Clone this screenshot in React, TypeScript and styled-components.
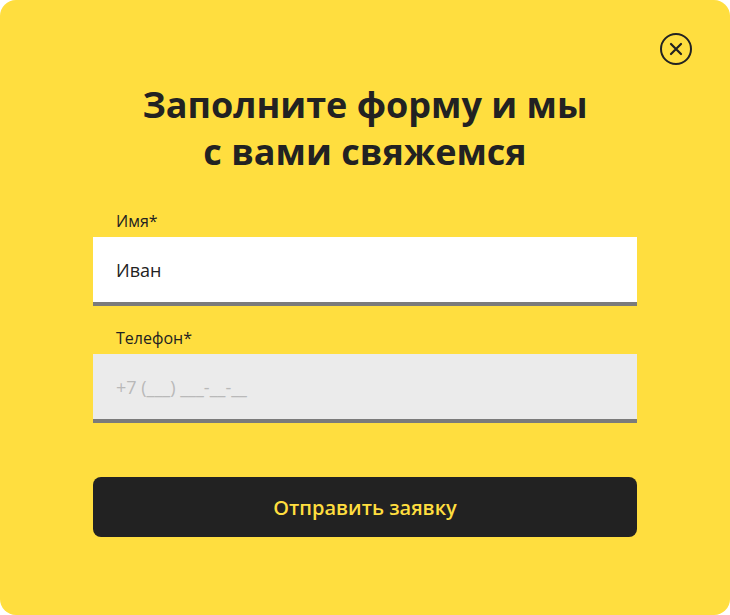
import { createGlobalStyle } from "styled-components";
import styled from "styled-components";

const GlobalStyle = createGlobalStyle`
  html, body {
    margin: 0;
    padding: 0;
    background: #ffffff;
  }
  * {
    box-sizing: border-box;
  }
`;

const Modal = styled.div`
  position: relative;
  width: 730px;
  height: 615px;
  background: #ffde3f;
  border-radius: 16px;
  font-family: "Open Sans", "Noto Sans", sans-serif;
  color: #222222;
  display: flex;
  flex-direction: column;
  align-items: center;
`;

const CloseButton = styled.button`
  position: absolute;
  top: 33px;
  right: 38px;
  width: 32px;
  height: 32px;
  padding: 0;
  border: none;
  background: transparent;
  cursor: pointer;
  display: flex;
  align-items: center;
  justify-content: center;
`;

const Title = styled.h2`
  margin: 81px 0 0;
  font-size: 36px;
  line-height: 47px;
  font-weight: 700;
  text-align: center;
`;

const Form = styled.form`
  width: 544px;
  margin-top: 36px;
  display: flex;
  flex-direction: column;
  row-gap: 22px;
`;

const Field = styled.label`
  display: flex;
  flex-direction: column;
  row-gap: 6px;
`;

const Label = styled.span`
  padding-left: 23px;
  font-size: 16px;
  line-height: 20px;
`;

const Input = styled.input<{ $filled?: boolean }>`
  height: 69px;
  padding: 0 23px;
  border: none;
  border-bottom: 4px solid #7b7b7b;
  border-radius: 0;
  outline: none;
  background: ${({ $filled }) => ($filled ? "#ffffff" : "#ebebeb")};
  font-family: inherit;
  font-size: 18px;
  color: #222222;

  &::placeholder {
    color: #b9b9b9;
  }
`;

const SubmitButton = styled.button`
  margin-top: 32px;
  height: 60px;
  border: none;
  border-radius: 8px;
  background: #222222;
  color: #ffde3f;
  font-family: inherit;
  font-size: 20px;
  font-weight: 600;
  cursor: pointer;
`;

const CloseIcon = () => (
  <svg width="32" height="32" viewBox="0 0 32 32" fill="none">
    <circle cx="16" cy="16" r="15" stroke="#222" strokeWidth="2" />
    <path d="M11 11L21 21M21 11L11 21" stroke="#222" strokeWidth="2.2" strokeLinecap="round" />
  </svg>
);

export default function App() {
  return (
    <>
      <GlobalStyle />
      <Modal>
        <CloseButton type="button" aria-label="Закрыть">
          <CloseIcon />
        </CloseButton>
        <Title>
          Заполните форму и мы
          <br />
          с вами свяжемся
        </Title>
        <Form onSubmit={(e) => e.preventDefault()}>
          <Field>
            <Label>Имя*</Label>
            <Input $filled defaultValue="Иван" />
          </Field>
          <Field>
            <Label>Телефон*</Label>
            <Input placeholder="+7 (___) ___-__-__" />
          </Field>
          <SubmitButton type="submit">Отправить заявку</SubmitButton>
        </Form>
      </Modal>
    </>
  );
}
